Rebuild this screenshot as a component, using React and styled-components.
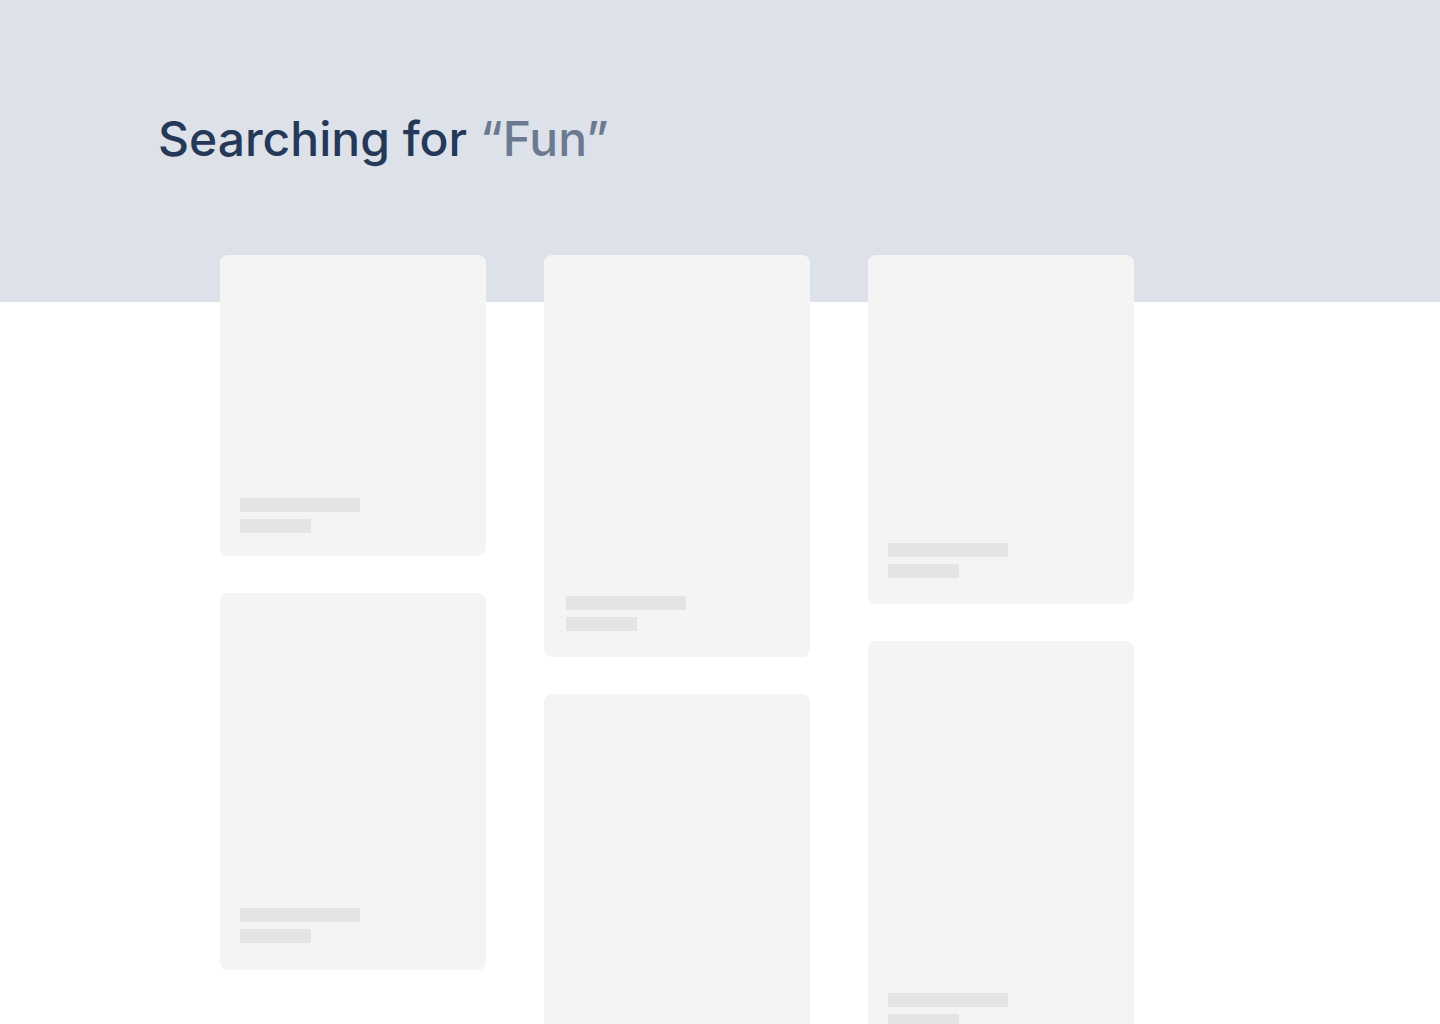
import React from 'react';
import styled, { createGlobalStyle } from 'styled-components';

const columns = [
  [
    { height: 301, pad: 24 },
    { height: 377, pad: 28 },
  ],
  [
    { height: 402, pad: 27, left: 22 },
    { height: 440, pad: 24, left: 22 },
  ],
  [
    { height: 349, pad: 27 },
    { height: 410, pad: 24 },
  ],
];

const App = () => {
  return (
    <>
      <GlobalStyle />
      <PageStyle>
        <HeaderStyle>
          <TitleStyle>
            Searching for <QueryStyle>“Fun”</QueryStyle>
          </TitleStyle>
        </HeaderStyle>
        <GridStyle>
          {columns.map((cards, i) => (
            <ColumnStyle key={i}>
              {cards.map((card, j) => (
                <CardStyle
                  key={j}
                  $height={card.height}
                  $pad={card.pad}
                  $left={card.left || 20}
                >
                  <LineStyle $width={120} />
                  <LineStyle $width={71} />
                </CardStyle>
              ))}
            </ColumnStyle>
          ))}
        </GridStyle>
      </PageStyle>
    </>
  );
};

export default App;

const GlobalStyle = createGlobalStyle`
  html, body {
    margin: 0;
    padding: 0;
    background: #ffffff;
  }
  body {
    font-family: 'Inter', 'Liberation Sans', sans-serif;
  }
`;

const PageStyle = styled.div`
  min-height: 1024px;
  overflow: hidden;
  background: linear-gradient(#dde1e9 0, #dde1e9 302px, #ffffff 302px);
`;

const HeaderStyle = styled.div`
  padding: 107px 0 0 158px;
  height: 148px;
  box-sizing: border-box;
`;

const TitleStyle = styled.h1`
  margin: 0;
  font-family: 'Inter', 'Liberation Sans', sans-serif;
  font-size: 48px;
  font-weight: 500;
  line-height: 64px;
  letter-spacing: 0;
  color: #253858;
`;

const QueryStyle = styled.span`
  color: #6b7a90;
`;

const GridStyle = styled.div`
  display: grid;
  grid-template-columns: repeat(3, 266px);
  column-gap: 58px;
  align-items: start;
  padding: 107px 0 0 220px;
`;

const ColumnStyle = styled.div`
  display: flex;
  flex-direction: column;
  gap: 37px;
`;

const CardStyle = styled.div`
  height: ${(p) => p.$height}px;
  box-sizing: border-box;
  background: #f4f4f4;
  border-radius: 8px;
  display: flex;
  flex-direction: column;
  justify-content: flex-end;
  gap: 7px;
  padding: 0 20px ${(p) => p.$pad - 1}px ${(p) => p.$left}px;
`;

const LineStyle = styled.div`
  width: ${(p) => p.$width}px;
  height: 14px;
  background: #e4e4e4;
`;
